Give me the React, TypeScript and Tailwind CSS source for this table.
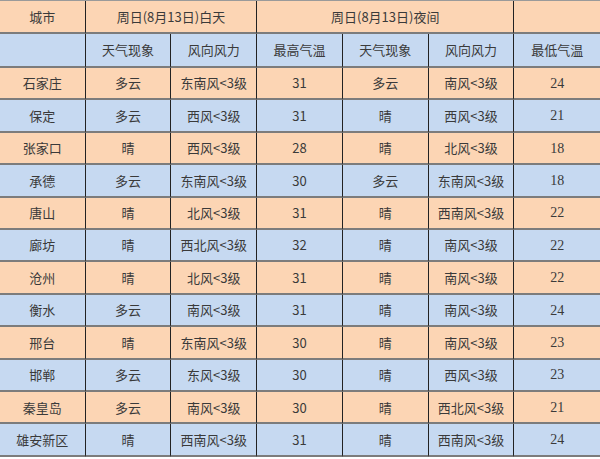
const PEACH = "bg-[#fcd5b4]";
const BLUE = "bg-[#c6d9f1]";

type Row = [string, string, string, string, string, string, string];

const rows: Row[] = [
  ["石家庄", "多云", "东南风<3级", "31", "多云", "南风<3级", "24"],
  ["保定", "多云", "西风<3级", "31", "晴", "西风<3级", "21"],
  ["张家口", "晴", "西风<3级", "28", "晴", "北风<3级", "18"],
  ["承德", "多云", "东南风<3级", "30", "多云", "东南风<3级", "18"],
  ["唐山", "晴", "北风<3级", "31", "晴", "西南风<3级", "22"],
  ["廊坊", "晴", "西北风<3级", "32", "晴", "南风<3级", "22"],
  ["沧州", "晴", "北风<3级", "31", "晴", "南风<3级", "22"],
  ["衡水", "多云", "南风<3级", "31", "晴", "南风<3级", "24"],
  ["邢台", "晴", "东南风<3级", "30", "晴", "南风<3级", "23"],
  ["邯郸", "多云", "东风<3级", "30", "晴", "西风<3级", "23"],
  ["秦皇岛", "多云", "南风<3级", "30", "晴", "西北风<3级", "21"],
  ["雄安新区", "晴", "西南风<3级", "31", "晴", "西南风<3级", "24"],
];

const subHeaders = ["", "天气现象", "风向风力", "最高气温", "天气现象", "风向风力", "最低气温"];

function Cell({
  children,
  bg,
  span = "",
  last = false,
  serif = false,
}: {
  children?: React.ReactNode;
  bg: string;
  span?: string;
  last?: boolean;
  serif?: boolean;
}) {
  return (
    <div
      className={`${bg} ${span} flex items-center justify-center border-b-2 border-b-[#7c7c7c] ${
        last ? "" : "border-r border-r-[#222]"
      } ${serif ? "text-[14px] font-['Liberation_Serif','Noto_Sans_CJK_SC',serif]" : ""}`}
    >
      {children}
    </div>
  );
}

export default function App() {
  return (
    <div className="w-[600px] h-[459px] bg-white overflow-hidden">
      <div className="grid grid-cols-7 grid-rows-[33px_34px_repeat(12,32.42px)] border-t border-t-[#9a9a9a] text-[13px] text-[#3a3a3a] font-['Noto_Sans_CJK_SC','Noto_Sans',sans-serif]">
        <Cell bg={PEACH}>城市</Cell>
        <Cell bg={PEACH} span="col-span-2">周日(8月13日)白天</Cell>
        <Cell bg={PEACH} span="col-span-3">周日(8月13日)夜间</Cell>
        <Cell bg={PEACH} last />

        {subHeaders.map((h, i) => (
          <Cell key={i} bg={BLUE} last={i === 6}>
            {h}
          </Cell>
        ))}

        {rows.map((row, r) =>
          row.map((val, c) => (
            <Cell key={`${r}-${c}`} bg={r % 2 === 0 ? PEACH : BLUE} last={c === 6} serif={c === 6}>
              {val}
            </Cell>
          )),
        )}
      </div>
    </div>
  );
}
